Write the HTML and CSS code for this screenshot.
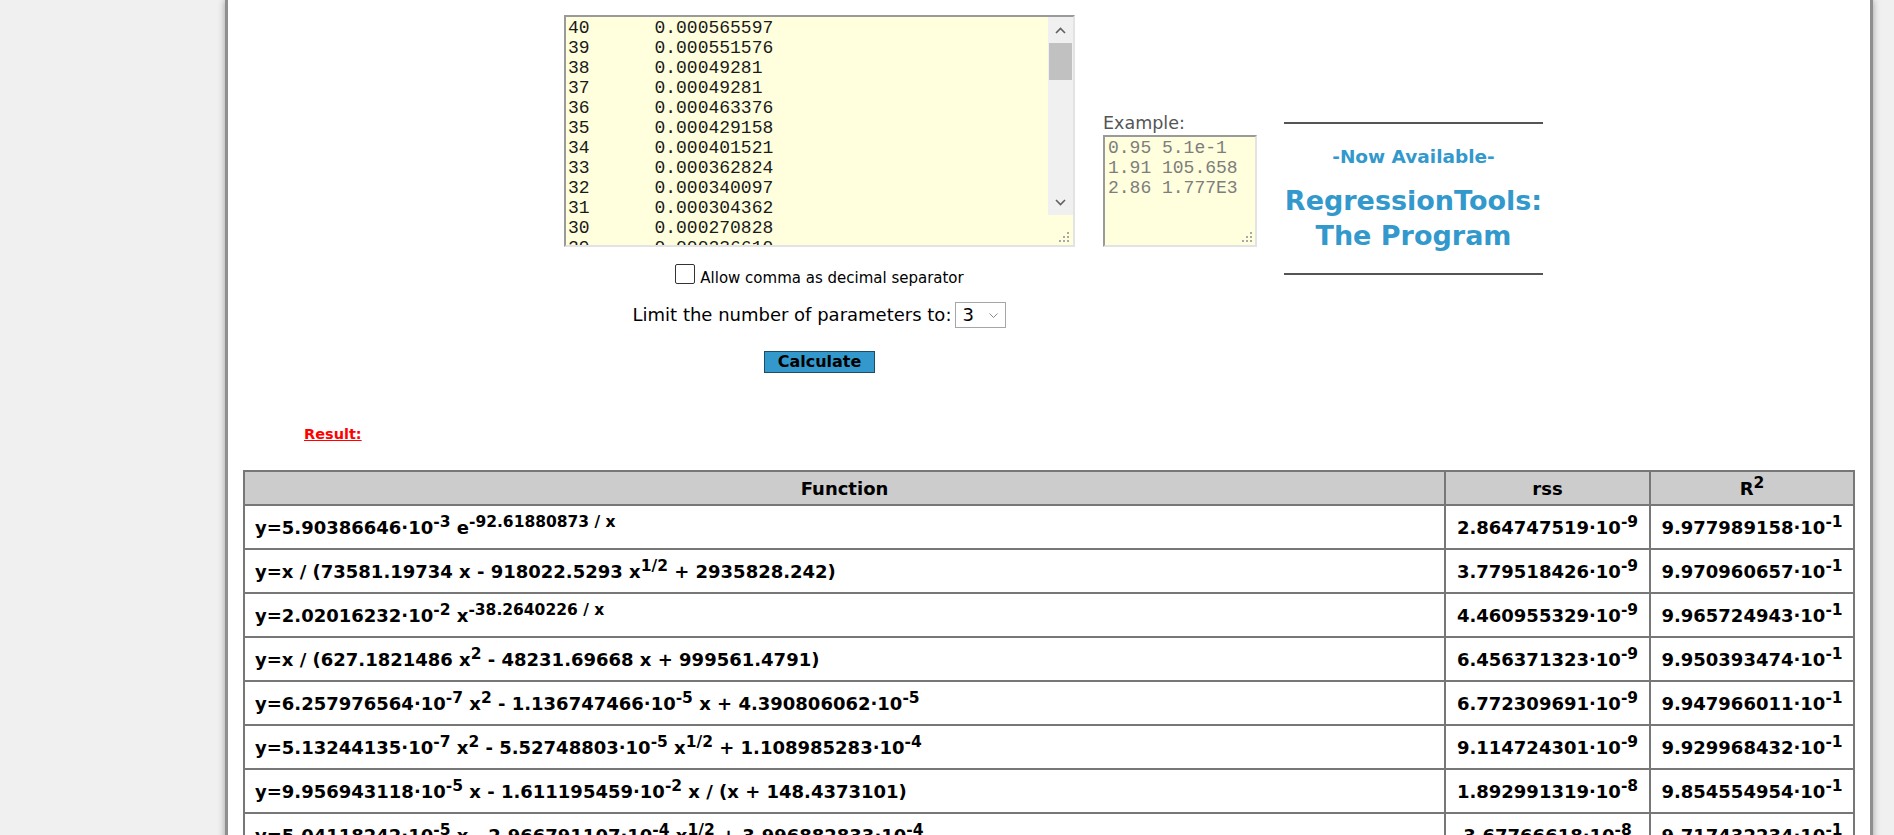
FILE: index.html
```html
<!DOCTYPE html>
<html lang="en">
<head>
<meta charset="utf-8">
<title>Regression</title>
<link rel="stylesheet" href="styles.css">
</head>
<body>
<div class="page">
  <div class="top">
    <div class="top-spacer"></div>
    <div class="center">
      <div class="databox">
        <textarea class="data" readonly>40&#9;0.000565597
39&#9;0.000551576
38&#9;0.00049281
37&#9;0.00049281
36&#9;0.000463376
35&#9;0.000429158
34&#9;0.000401521
33&#9;0.000362824
32&#9;0.000340097
31&#9;0.000304362
30&#9;0.000270828
29&#9;0.000236610</textarea>
        <div class="sidecol">
          <div class="vscroll">
            <div class="sb-btn"><svg width="11" height="7" viewBox="0 0 11 7"><path d="M1 6 L5.5 1.5 L10 6" fill="none" stroke="#606060" stroke-width="1.6"/></svg></div>
            <div class="sb-thumb"></div>
            <div class="sb-track"></div>
            <div class="sb-btn"><svg width="11" height="7" viewBox="0 0 11 7"><path d="M1 1 L5.5 5.5 L10 1" fill="none" stroke="#606060" stroke-width="1.6"/></svg></div>
          </div>
          <div class="corner">
            <svg class="grip" width="10" height="10" viewBox="0 0 10 10"><g fill="#a8a8a8"><rect x="8" y="0" width="2" height="2"/><rect x="4" y="4" width="2" height="2"/><rect x="8" y="4" width="2" height="2"/><rect x="0" y="8" width="2" height="2"/><rect x="4" y="8" width="2" height="2"/><rect x="8" y="8" width="2" height="2"/></g></svg>
          </div>
        </div>
      </div>
      <label class="opt-comma"><input type="checkbox" class="chk"><span>Allow comma as decimal separator</span></label>
      <div class="opt-limit">
        <span>Limit the number of parameters to:</span>
        <span class="sel-wrap"><select class="sel"><option>3</option></select><svg width="9" height="5" viewBox="0 0 9 5"><path d="M0.5 0.5 L4.5 4.5 L8.5 0.5" fill="none" stroke="#8a8a8a" stroke-width="1"/></svg></span>
      </div>
      <button class="btn" type="button">Calculate</button>
    </div>
    <div class="example">
      <div class="ex-label">Example:</div>
      <div class="ex-box">
        <textarea class="ex" placeholder="0.95 5.1e-1&#10;1.91 105.658&#10;2.86 1.777E3"></textarea>
        <div class="ex-corner">
          <svg class="grip" width="10" height="10" viewBox="0 0 10 10"><g fill="#a8a8a8"><rect x="8" y="0" width="2" height="2"/><rect x="4" y="4" width="2" height="2"/><rect x="8" y="4" width="2" height="2"/><rect x="0" y="8" width="2" height="2"/><rect x="4" y="8" width="2" height="2"/><rect x="8" y="8" width="2" height="2"/></g></svg>
        </div>
      </div>
    </div>
    <div class="promo">
      <div class="promo-sub">-Now Available-</div>
      <div class="promo-title">RegressionTools:<br>The Program</div>
    </div>
  </div>

  <div class="result">Result:</div>

  <table class="res">
    <thead>
      <tr><th class="fn-h">Function</th><th class="num-h rss">rss</th><th class="num-h r2">R<sup>2</sup></th></tr>
    </thead>
    <tbody>
      <tr><td class="fn">y=5.90386646·10<sup>-3</sup> e<sup>-92.61880873 / x</sup></td><td class="num">2.864747519·10<sup>-9</sup></td><td class="num">9.977989158·10<sup>-1</sup></td></tr>
      <tr><td class="fn">y=x / (73581.19734 x - 918022.5293 x<sup>1/2</sup> + 2935828.242)</td><td class="num">3.779518426·10<sup>-9</sup></td><td class="num">9.970960657·10<sup>-1</sup></td></tr>
      <tr><td class="fn">y=2.02016232·10<sup>-2</sup> x<sup>-38.2640226 / x</sup></td><td class="num">4.460955329·10<sup>-9</sup></td><td class="num">9.965724943·10<sup>-1</sup></td></tr>
      <tr><td class="fn">y=x / (627.1821486 x<sup>2</sup> - 48231.69668 x + 999561.4791)</td><td class="num">6.456371323·10<sup>-9</sup></td><td class="num">9.950393474·10<sup>-1</sup></td></tr>
      <tr><td class="fn">y=6.257976564·10<sup>-7</sup> x<sup>2</sup> - 1.136747466·10<sup>-5</sup> x + 4.390806062·10<sup>-5</sup></td><td class="num">6.772309691·10<sup>-9</sup></td><td class="num">9.947966011·10<sup>-1</sup></td></tr>
      <tr><td class="fn">y=5.13244135·10<sup>-7</sup> x<sup>2</sup> - 5.52748803·10<sup>-5</sup> x<sup>1/2</sup> + 1.108985283·10<sup>-4</sup></td><td class="num">9.114724301·10<sup>-9</sup></td><td class="num">9.929968432·10<sup>-1</sup></td></tr>
      <tr><td class="fn">y=9.956943118·10<sup>-5</sup> x - 1.611195459·10<sup>-2</sup> x / (x + 148.4373101)</td><td class="num">1.892991319·10<sup>-8</sup></td><td class="num">9.854554954·10<sup>-1</sup></td></tr>
      <tr><td class="fn">y=5.04118242·10<sup>-5</sup> x - 2.966791107·10<sup>-4</sup> x<sup>1/2</sup> + 3.996882833·10<sup>-4</sup></td><td class="num">3.67766618·10<sup>-8</sup></td><td class="num">9.717432234·10<sup>-1</sup></td></tr>
    </tbody>
  </table>
</div>
</body>
</html>
```

FILE: styles.css
```css
html, body {
  margin: 0;
  height: 100%;
  overflow: hidden;
  background: #f0f0f0;
}

.page {
  box-sizing: border-box;
  margin-left: 225px;
  width: 1648px;
  min-height: 100%;
  padding: 15px 15px 0;
  background: #fff;
  border-left: 3px solid #8f8f8f;
  border-right: 3px solid #8f8f8f;
  box-shadow: 0 0 7px rgba(0, 0, 0, 0.35);
  font-family: "DejaVu Sans", Verdana, sans-serif;
  color: #000;
}

/* ---------- top form area ---------- */
.top {
  display: flex;
  align-items: flex-start;
}

.top-spacer {
  flex: none;
  width: 321px;
}

.center {
  flex: none;
  width: 511px;
  display: flex;
  flex-direction: column;
  align-items: center;
}

.databox {
  display: flex;
  box-sizing: border-box;
  width: 511px;
  height: 232px;
  border: 2px solid;
  border-color: #9a9a9a #e3e3e3 #e3e3e3 #9a9a9a;
  background: #ffffdd;
}

.data {
  flex: 1;
  min-width: 0;
  margin: 0;
  border: 0;
  padding: 1px 2px;
  background: transparent;
  font: 18px/20px "Liberation Mono", "Courier New", monospace;
  color: #1a1a1a;
  tab-size: 8;
  resize: none;
  overflow: hidden;
  outline: none;
}

.sidecol {
  flex: none;
  width: 25px;
  display: flex;
  flex-direction: column;
}

.vscroll {
  flex: 1;
  display: flex;
  flex-direction: column;
  background: #f0f0f0;
}

.sb-btn {
  flex: none;
  height: 26px;
  display: flex;
  align-items: center;
  justify-content: center;
}

.sb-thumb {
  flex: none;
  height: 37px;
  margin: 0 1px;
  background: #c1c1c1;
}

.sb-track {
  flex: 1;
}

.corner {
  flex: none;
  height: 27px;
  display: flex;
  align-items: flex-end;
  justify-content: flex-end;
  padding: 0 4px 3px 0;
}

.grip {
  display: block;
}

.opt-comma {
  display: flex;
  align-items: flex-end;
  gap: 5px;
  margin-top: 17px;
  font-size: 15px;
  line-height: 20px;
}

.opt-comma span {
  margin-bottom: -4px;
}

.chk {
  appearance: none;
  -webkit-appearance: none;
  margin: 0;
  width: 20px;
  height: 20px;
  box-sizing: border-box;
  border: 1px solid #333;
  border-radius: 2px;
  background: #fff;
}

.opt-limit {
  display: flex;
  align-items: center;
  gap: 4px;
  margin-top: 18px;
  font-size: 18px;
  line-height: 26px;
}

.sel-wrap {
  display: inline-flex;
  align-items: center;
  box-sizing: border-box;
  width: 51px;
  height: 26px;
  border: 1px solid #a6a6a6;
  background: #fff;
}

.sel {
  appearance: none;
  -webkit-appearance: none;
  width: 33px;
  border: 0;
  margin: 0;
  padding: 0 0 0 6px;
  background: transparent;
  font: 18px/24px "DejaVu Sans", Verdana, sans-serif;
  color: #000;
  outline: none;
}

.btn {
  margin-top: 23px;
  width: 111px;
  height: 22px;
  padding: 0;
  border: 1px solid #1d4d66;
  background: #3399cc;
  font: bold 16px/20px "DejaVu Sans", Verdana, sans-serif;
  color: #000;
}

.example {
  flex: none;
  margin-left: 28px;
  margin-top: 98px;
}

.ex-label {
  font-size: 17.5px;
  line-height: 20px;
  color: #555;
  margin-bottom: 2px;
}

.ex-box {
  display: flex;
  box-sizing: border-box;
  width: 154px;
  height: 112px;
  border: 2px solid;
  border-color: #9a9a9a #e3e3e3 #e3e3e3 #9a9a9a;
  background: #ffffdd;
}

.ex {
  flex: 1;
  min-width: 0;
  margin: 0;
  border: 0;
  padding: 1px 0 0 3px;
  background: transparent;
  font: 18px/20px "Liberation Mono", "Courier New", monospace;
  resize: none;
  overflow: hidden;
  outline: none;
}

.ex::placeholder {
  color: #7d7d7d;
  opacity: 1;
}

.ex-corner {
  flex: none;
  width: 14px;
  display: flex;
  align-items: flex-end;
  justify-content: flex-end;
  padding: 0 3px 3px 0;
}

.promo {
  flex: none;
  box-sizing: border-box;
  width: 259px;
  margin-left: 27px;
  margin-top: 107px;
  padding: 22px 0 20px;
  border-top: 2px solid #555;
  border-bottom: 2px solid #555;
  text-align: center;
  color: #3399cc;
  font-weight: bold;
}

.promo-sub {
  font-size: 18.5px;
  line-height: 22px;
  margin-bottom: 15px;
}

.promo-title {
  font-size: 27px;
  line-height: 35px;
  white-space: nowrap;
}

/* ---------- results ---------- */
.result {
  margin: 52px 0 0 61px;
  font-size: 14.5px;
  line-height: 18px;
  font-weight: bold;
  color: #f00;
  text-decoration: underline;
}

.res {
  margin-top: 27px;
  width: 100%;
  border-collapse: collapse;
  border: 2px solid #666;
  font-size: 18px;
  font-weight: bold;
}

.res th,
.res td {
  border: 2px solid #777;
  padding: 0 10px;
  white-space: nowrap;
}

.res th {
  height: 32px;
  background: #cccccc;
  text-align: center;
}

.res td {
  height: 42px;
}

.res td.fn {
  text-align: left;
}

.res td.num {
  text-align: center;
}

.res th.rss {
  width: 183px;
}

.res th.r2 {
  width: 182px;
}

.res sup {
  font-size: 15.5px;
  line-height: 0;
}
```
